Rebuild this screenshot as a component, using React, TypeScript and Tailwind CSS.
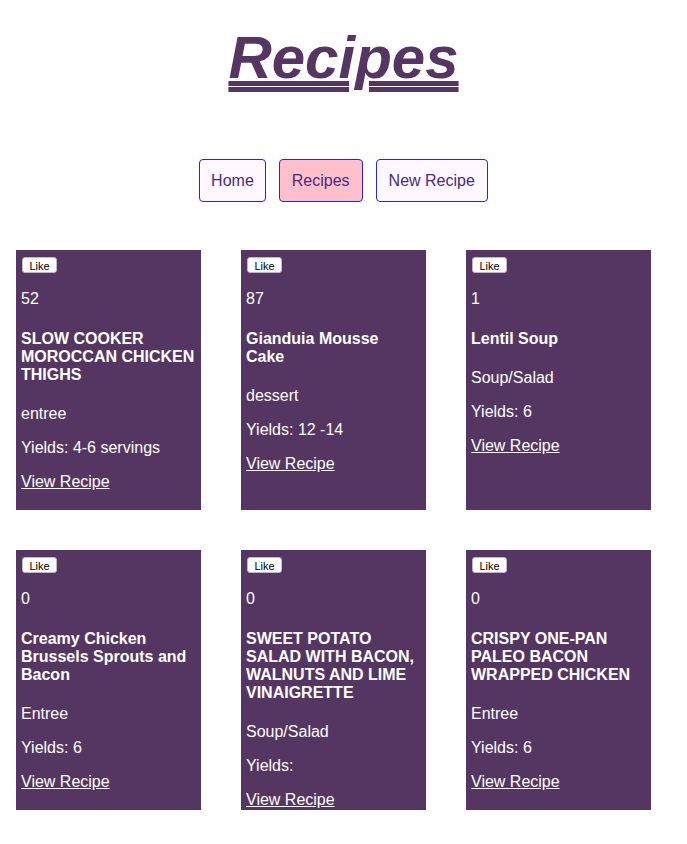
import React from "react";

type Recipe = { likes: number; title: string; category: string; yields: string };

const recipes: Recipe[] = [
  { likes: 52, title: "SLOW COOKER MOROCCAN CHICKEN THIGHS", category: "entree", yields: "Yields: 4-6 servings" },
  { likes: 87, title: "Gianduia Mousse Cake", category: "dessert", yields: "Yields: 12 -14" },
  { likes: 1, title: "Lentil Soup", category: "Soup/Salad", yields: "Yields: 6" },
  { likes: 0, title: "Creamy Chicken Brussels Sprouts and Bacon", category: "Entree", yields: "Yields: 6" },
  { likes: 0, title: "SWEET POTATO SALAD WITH BACON, WALNUTS AND LIME VINAIGRETTE", category: "Soup/Salad", yields: "Yields:" },
  { likes: 0, title: "CRISPY ONE-PAN PALEO BACON WRAPPED CHICKEN", category: "Entree", yields: "Yields: 6" },
];

function Card({ r }: { r: Recipe }) {
  return (
    <div className="w-[185px] h-[260px] bg-[#553662] px-[5px] text-white text-[16px] leading-[18px]">
      <button className="mt-[7px] ml-[1px] block h-[16px] w-[35px] rounded-[3px] bg-white text-black text-[11px] leading-[16px] border border-[#bbb]">
        Like
      </button>
      <p className="mt-[17px]">{r.likes}</p>
      <h4 className="mt-[22px] font-bold">{r.title}</h4>
      <p className="mt-[21px]">{r.category}</p>
      <p className="mt-[16px]">{r.yields}</p>
      <p className="mt-[16px]">
        <a href="#" className="underline text-white">View Recipe</a>
      </p>
    </div>
  );
}

export default function App() {
  return (
    <div className="min-h-[844px] bg-white" style={{ fontFamily: '"Liberation Sans", Arial, sans-serif' }}>
      <div className="flex justify-center pt-[23px]">
        <h1 className="text-[60px] leading-[69px] font-bold italic text-[#553662] underline decoration-double decoration-[5px] underline-offset-[3px]">
          Recipes
        </h1>
      </div>
      <nav className="mt-[67px] flex justify-center gap-[13px]">
        <button className="h-[43px] rounded-[4px] border border-[#2323ee] bg-[#fff8ff] px-[11px] text-[16px] text-[#4a2a7e]">Home</button>
        <button className="h-[43px] rounded-[4px] border border-[#2323ee] bg-[#ffc0cb] px-[12px] text-[16px] text-[#4a2a7e]">Recipes</button>
        <button className="h-[43px] rounded-[4px] border border-[#2323ee] bg-[#fff8ff] px-[12px] text-[16px] text-[#4a2a7e]">New Recipe</button>
      </nav>
      <div className="mt-[48px] pl-[16px] grid grid-cols-[185px_185px_185px] gap-x-[40px] gap-y-[40px] pb-[34px]">
        {recipes.map((r, i) => (
          <Card key={i} r={r} />
        ))}
      </div>
    </div>
  );
}
